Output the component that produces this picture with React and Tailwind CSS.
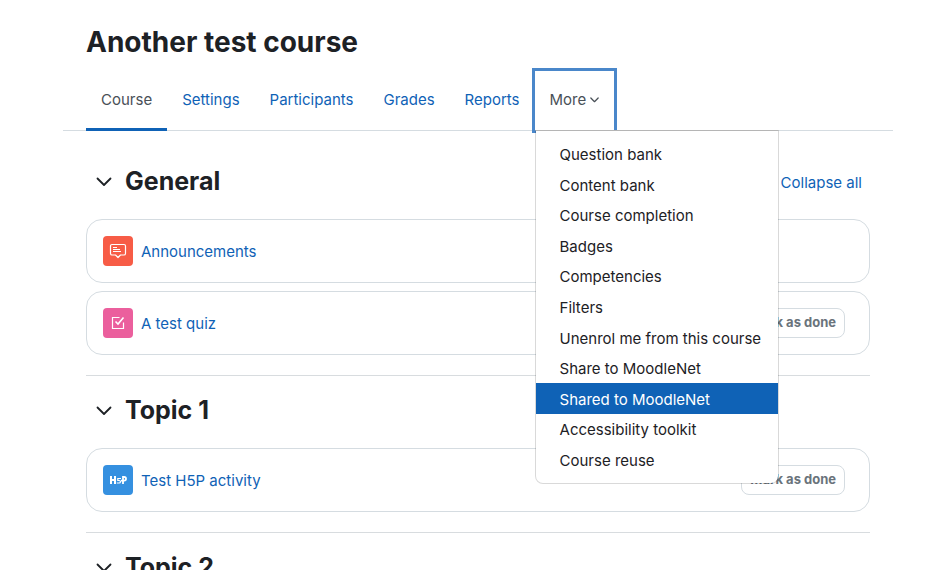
import React, { useState } from "react";

const tabs = ["Course", "Settings", "Participants", "Grades", "Reports"];

const moreItems = [
  "Question bank",
  "Content bank",
  "Course completion",
  "Badges",
  "Competencies",
  "Filters",
  "Unenrol me from this course",
  "Share to MoodleNet",
  "Shared to MoodleNet",
  "Accessibility toolkit",
  "Course reuse",
];

const sections = [
  {
    title: "General",
    activities: [
      { name: "Announcements", type: "forum", completion: false },
      { name: "A test quiz", type: "quiz", completion: true },
    ],
  },
  {
    title: "Topic 1",
    activities: [{ name: "Test H5P activity", type: "h5p", completion: true }],
  },
  { title: "Topic 2", activities: [] },
];

const iconColors = {
  forum: "bg-[#f75c46]",
  quiz: "bg-[#eb5f9d]",
  h5p: "bg-[#3590e0]",
};

const Chevron = ({ className, stroke }) => (
  <svg
    className={className}
    viewBox="0 0 16 10"
    fill="none"
    stroke="currentColor"
    strokeWidth={stroke}
    strokeLinecap="round"
    strokeLinejoin="round"
    aria-hidden="true"
  >
    <path d="M1.500 1.500 L8 8 L14.500 1.500" />
  </svg>
);

const ActivityIcon = ({ type }) => (
  <span
    className={`flex size-[30px] shrink-0 items-center justify-center rounded-[4px] text-white ${iconColors[type]}`}
  >
    {type === "forum" && (
      <svg width="18" height="18" viewBox="0 0 18 18" fill="none" stroke="currentColor" aria-hidden="true">
        <path
          d="M3 2.500H15A1.500 1.500 0 0 1 16.500 4V11.500A1.500 1.500 0 0 1 15 13H11.500L9 15.500L6.500 13H3A1.500 1.500 0 0 1 1.500 11.500V4A1.500 1.500 0 0 1 3 2.500Z"
          strokeWidth="1.2"
          strokeLinejoin="round"
        />
        <path d="M4 5.500H8M4 7.500H11M4 9.500H12" strokeWidth="1" />
      </svg>
    )}
    {type === "quiz" && (
      <svg width="16" height="16" viewBox="0 0 16 16" fill="none" stroke="currentColor" aria-hidden="true">
        <path d="M9.500 2.500H2.500V13.500H13.500V7.500" strokeWidth="1.2" />
        <path d="M5.500 6.500L8 9L13.500 2.500" strokeWidth="1.6" />
      </svg>
    )}
    {type === "h5p" && (
      <svg width="18" height="10" viewBox="0 0 18 10" fill="none" stroke="currentColor" aria-hidden="true">
        <path d="M2 1V9M6 1V9M2 5H6" strokeWidth="2" />
        <path d="M12 3.500H8.800V5.500H10.200A1.200 1.200 0 0 1 10.200 8H7.800" strokeWidth="1.2" />
        <path d="M14 9V2H15.200A1.700 1.700 0 0 1 15.200 5.600H12" strokeWidth="1.8" />
      </svg>
    )}
  </span>
);

const Activity = ({ activity }) => (
  <li className="flex h-16 items-center rounded-2xl border border-[#d5dce1] pr-6 pl-4">
    <ActivityIcon type={activity.type} />
    <a href="#" className="ml-2 pt-0.5 text-[15px] leading-6 text-[#0f62b6]">
      {activity.name}
    </a>
    {activity.completion && (
      <button className="ml-auto h-[30px] rounded-lg border border-[#d5dce1] px-2 text-[13px] font-bold text-[#6a737b]">
        Mark as done
      </button>
    )}
  </li>
);

const Section = ({ section, first }) => {
  const [open, setOpen] = useState(true);

  return (
    <section className="border-b border-[#d8dcdf] pb-5">
      <div className="flex h-[72px] items-center">
        <button
          className="flex w-[35px] justify-center pb-0.5 text-[#1d2125]"
          aria-label={`Toggle ${section.title}`}
          onClick={() => setOpen(!open)}
        >
          <Chevron className="h-[10px] w-4" stroke="1.8" />
        </button>
        <h2 className="ml-1 pb-1 text-[25px] leading-8 font-bold text-[#1d2125]">{section.title}</h2>
        {first && (
          <a href="#" className="mr-2 ml-auto text-[15px] leading-6 text-[#0f62b6]">
            Collapse all
          </a>
        )}
      </div>
      {open && (
        <ul className="flex flex-col gap-2">
          {section.activities.map((activity) => (
            <Activity key={activity.name} activity={activity} />
          ))}
        </ul>
      )}
    </section>
  );
};

const MoreMenu = () => (
  <div className="absolute top-full left-0 z-10 w-[244px] rounded-b-lg border border-black/15 border-t-[#b5b5b5] bg-white bg-clip-padding py-2">
    <ul className="grid h-[336px] auto-rows-fr">
      {moreItems.map((item) => (
        <li key={item} className="grid">
          <a
            href="#"
            className={`flex items-center pt-0.5 pr-4 pl-6 text-[15px] leading-6 whitespace-nowrap ${
              item === "Shared to MoodleNet" ? "bg-[#0f62b6] text-white" : "text-[#1d2125]"
            }`}
          >
            {item}
          </a>
        </li>
      ))}
    </ul>
  </div>
);

const App = () => {
  const [menuOpen, setMenuOpen] = useState(true);

  return (
    <div className="min-h-screen bg-white pr-[52px] pl-[63px] font-['Inter',sans-serif]">
      <header className="px-[23px] pt-6">
        <h1 className="text-[28px] leading-9 font-bold text-[#1d2125]">Another test course</h1>
      </header>
      <nav className="mt-[11px] flex h-[60px] border-b border-[#d5dce1] px-[23px] text-[15px] leading-6">
        {tabs.map((tab) => (
          <a
            key={tab}
            href="#"
            className={`-mb-px flex items-center border-b-[3px] px-[15px] ${
              tab === "Course" ? "border-[#0f62b6] text-[#495057]" : "border-transparent text-[#0f62b6]"
            }`}
          >
            {tab}
          </a>
        ))}
        <div className="relative flex">
          <button
            className="flex items-center gap-1 px-[15px] pb-0.5 text-[#495057] ring-3 ring-[#4a87ca]"
            aria-expanded={menuOpen}
            onClick={() => setMenuOpen(!menuOpen)}
          >
            More
            <Chevron className="h-[6px] w-[9px]" stroke="2.2" />
          </button>
          {menuOpen && <MoreMenu />}
        </div>
      </nav>
      <main className="px-[23px] pt-4">
        {sections.map((section, i) => (
          <Section key={section.title} section={section} first={i === 0} />
        ))}
      </main>
    </div>
  );
};

export default App;
